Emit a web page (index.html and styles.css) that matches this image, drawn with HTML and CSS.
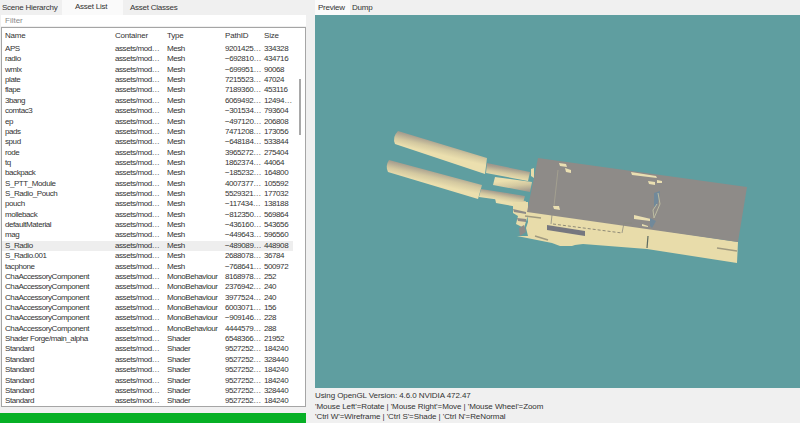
FILE: index.html
```html
<!DOCTYPE html>
<html lang="en">
<head>
<meta charset="utf-8">
<title>Asset List</title>
<link rel="stylesheet" href="styles.css">
</head>
<body>
<div class="app">
  <section class="left">
    <div class="tabs">
      <span class="tab tab-scene">Scene Hierarchy</span>
      <span class="tab tab-list">Asset List</span>
      <span class="tab tab-classes">Asset Classes</span>
    </div>
    <div class="filter">Filter</div>
    <div class="list">
      <div class="row head"><span>Name</span><span>Container</span><span>Type</span><span>PathID</span><span>Size</span></div>
      <div class="row"><span>APS</span><span>assets/mod…</span><span>Mesh</span><span>9201425…</span><span>334328</span></div>
      <div class="row"><span>radio</span><span>assets/mod…</span><span>Mesh</span><span>−692810…</span><span>434716</span></div>
      <div class="row"><span>wmlx</span><span>assets/mod…</span><span>Mesh</span><span>−699951…</span><span>90068</span></div>
      <div class="row"><span>plate</span><span>assets/mod…</span><span>Mesh</span><span>7215523…</span><span>47024</span></div>
      <div class="row"><span>flape</span><span>assets/mod…</span><span>Mesh</span><span>7189360…</span><span>453116</span></div>
      <div class="row"><span>3bang</span><span>assets/mod…</span><span>Mesh</span><span>6069492…</span><span>12494…</span></div>
      <div class="row"><span>comtac3</span><span>assets/mod…</span><span>Mesh</span><span>−301534…</span><span>793604</span></div>
      <div class="row"><span>ep</span><span>assets/mod…</span><span>Mesh</span><span>−497120…</span><span>206808</span></div>
      <div class="row"><span>pads</span><span>assets/mod…</span><span>Mesh</span><span>7471208…</span><span>173056</span></div>
      <div class="row"><span>spud</span><span>assets/mod…</span><span>Mesh</span><span>−648184…</span><span>533844</span></div>
      <div class="row"><span>rode</span><span>assets/mod…</span><span>Mesh</span><span>3965272…</span><span>275404</span></div>
      <div class="row"><span>tq</span><span>assets/mod…</span><span>Mesh</span><span>1862374…</span><span>44064</span></div>
      <div class="row"><span>backpack</span><span>assets/mod…</span><span>Mesh</span><span>−185232…</span><span>164800</span></div>
      <div class="row"><span>S_PTT_Module</span><span>assets/mod…</span><span>Mesh</span><span>4007377…</span><span>105592</span></div>
      <div class="row"><span>S_Radio_Pouch</span><span>assets/mod…</span><span>Mesh</span><span>5529321…</span><span>177032</span></div>
      <div class="row"><span>pouch</span><span>assets/mod…</span><span>Mesh</span><span>−117434…</span><span>138188</span></div>
      <div class="row"><span>molleback</span><span>assets/mod…</span><span>Mesh</span><span>−812350…</span><span>569864</span></div>
      <div class="row"><span>defaultMaterial</span><span>assets/mod…</span><span>Mesh</span><span>−436160…</span><span>543656</span></div>
      <div class="row"><span>mag</span><span>assets/mod…</span><span>Mesh</span><span>−449643…</span><span>596560</span></div>
      <div class="row selected"><span>S_Radio</span><span>assets/mod…</span><span>Mesh</span><span>−489089…</span><span>448908</span></div>
      <div class="row"><span>S_Radio.001</span><span>assets/mod…</span><span>Mesh</span><span>2688078…</span><span>36784</span></div>
      <div class="row"><span>tacphone</span><span>assets/mod…</span><span>Mesh</span><span>−768641…</span><span>500972</span></div>
      <div class="row"><span>ChaAccessoryComponent</span><span>assets/mod…</span><span>MonoBehaviour</span><span>8168978…</span><span>252</span></div>
      <div class="row"><span>ChaAccessoryComponent</span><span>assets/mod…</span><span>MonoBehaviour</span><span>2376942…</span><span>240</span></div>
      <div class="row"><span>ChaAccessoryComponent</span><span>assets/mod…</span><span>MonoBehaviour</span><span>3977524…</span><span>240</span></div>
      <div class="row"><span>ChaAccessoryComponent</span><span>assets/mod…</span><span>MonoBehaviour</span><span>6003071…</span><span>156</span></div>
      <div class="row"><span>ChaAccessoryComponent</span><span>assets/mod…</span><span>MonoBehaviour</span><span>−909146…</span><span>228</span></div>
      <div class="row"><span>ChaAccessoryComponent</span><span>assets/mod…</span><span>MonoBehaviour</span><span>4444579…</span><span>288</span></div>
      <div class="row"><span>Shader Forge/main_alpha</span><span>assets/mod…</span><span>Shader</span><span>6548366…</span><span>21952</span></div>
      <div class="row"><span>Standard</span><span>assets/mod…</span><span>Shader</span><span>9527252…</span><span>184240</span></div>
      <div class="row"><span>Standard</span><span>assets/mod…</span><span>Shader</span><span>9527252…</span><span>328440</span></div>
      <div class="row"><span>Standard</span><span>assets/mod…</span><span>Shader</span><span>9527252…</span><span>184240</span></div>
      <div class="row"><span>Standard</span><span>assets/mod…</span><span>Shader</span><span>9527252…</span><span>184240</span></div>
      <div class="row"><span>Standard</span><span>assets/mod…</span><span>Shader</span><span>9527252…</span><span>328440</span></div>
      <div class="row"><span>Standard</span><span>assets/mod…</span><span>Shader</span><span>9527252…</span><span>184240</span></div>
      <div class="scrollbar"></div>
    </div>
    <div class="progress"></div>
  </section>
  <section class="right">
    <div class="tabs right-tabs">
      <span class="tab tab-preview">Preview</span>
      <span class="tab tab-dump">Dump</span>
    </div>
    <svg class="viewport" viewBox="315 15 485 373" aria-label="3D preview of the S_Radio mesh">
      <defs>
        <linearGradient id="stops">
          <stop offset="0" stop-color="#8f8b8a"/>
          <stop offset="0.3" stop-color="#a9a08f"/>
          <stop offset="0.65" stop-color="#d3c8a0"/>
          <stop offset="1" stop-color="#ebdfae"/>
        </linearGradient>
        <linearGradient id="barrel-a" href="#stops" gradientUnits="userSpaceOnUse" x1="445" y1="138" x2="441" y2="155"/>
        <linearGradient id="barrel-b" href="#stops" gradientUnits="userSpaceOnUse" x1="437" y1="166" x2="433" y2="184"/>
        <linearGradient id="neck-a" href="#stops" gradientUnits="userSpaceOnUse" x1="510" y1="165" x2="508" y2="178"/>
        <linearGradient id="neck-b" href="#stops" gradientUnits="userSpaceOnUse" x1="504" y1="190" x2="502" y2="201"/>
        <linearGradient id="block" href="#stops" gradientUnits="userSpaceOnUse" x1="514" y1="197" x2="512" y2="180"/>
      </defs>
      <path class="barrel-a" d="M398 131 L487 158 L485 174 L395 144 Q392 137 398 131Z"/>
      <path class="neck-a" d="M487 163 L530 172 L528 181 L486 173Z"/>
      <path class="barrel-b" d="M389 160 L482 185 L478 199 L388 172 Q385 166 389 160Z"/>
      <path class="neck-b" d="M481 189 L525 196 L523 203 L479 197Z"/>
      <path class="block" d="M495 177 L532 182 L530 192 L493 185Z"/>
      <path class="neck-b" d="M495 198 L526 201 L524 208 L496 203Z"/>
      <path class="cream" d="M531 169 L534 168 L534 178 L531 176Z"/>
      <path class="cream" d="M513 202 L528 202 L528 215 L524 228 L516 224 L518 216 L513 213Z"/>
      <path class="grey" d="M513 209 L526 212 L526 214 L514 212Z"/>
      <path class="grey" d="M517 218 L526 219 L526 222 L518 221Z"/>
      <path class="grey" d="M519 228 L524 225 L526 232 L520 236Z"/>
      <path class="cream" d="M527 210 L738 242 L737 263 L647 249 L583 244 L575 245 L572 246 L560 246 L552 243 L517 236 L528 236 L526 228 L528 222Z"/>
      <path class="grey" d="M538 158 L747 187 L738 242 L527 212Z"/>
      <ellipse class="cream" cx="567" cy="240" rx="9" ry="5.5"/>
      <path class="slot" d="M547 225 L585 231 L585 236 L547 230Z"/>
      <path class="dash" d="M553 224 L622 233"/>
      <path class="thin" d="M552 215 L551 224 M622 233 L624 223 L632 223"/>
      <path class="dark" d="M648 236 L647 248"/>
      <path class="line" d="M717 248 L737 251"/>
      <path class="line" d="M525 216 L541 218"/>
      <path class="line" d="M535 236 L548 240"/>
      <path class="hi" d="M559 163 L566 164 L567 167 L560 166Z M565 168 L571 170 L571 173 L566 172Z M631 172 L656 176 L657 178 L632 175Z M648 181 L655 182 L655 185 L649 184Z M657 180 L662 181 L662 183 L657 183Z M553 206 L559 206 L560 210 L554 209Z M634 215 L651 219 L650 221 L634 219Z M642 224 L648 226 L648 227 L642 226Z"/>
      <path class="thin pale" d="M558 170 L554 206"/>
      <path class="bluish" d="M654 193 L660 191 L659 198 L657 206 L654 207Z M650 218 L656 221 L652 228 L650 226Z"/>
      <path class="outline" d="M658 193 L660 204 L654 218 L653 210 L657 204"/>
    </svg>
    <div class="status">
      <p>Using OpenGL Version: 4.6.0 NVIDIA 472.47</p>
      <p>'Mouse Left'=Rotate | 'Mouse Right'=Move | 'Mouse Wheel'=Zoom</p>
      <p>'Ctrl W'=Wireframe | 'Ctrl S'=Shade | 'Ctrl N'=ReNormal</p>
    </div>
  </section>
</div>
</body>
</html>
```
FILE: styles.css
```css
* { box-sizing: border-box; }
html, body { margin: 0; height: 100%; }
body {
  background: #f0f0f0;
  color: #333;
  font-family: "Liberation Sans", Arial, sans-serif;
  font-size: 8px;
  overflow: hidden;
}
.app {
  display: flex;
  width: 800px;
  height: 423px;
  gap: 8px;
}
.left {
  width: 307px;
  flex: none;
  display: flex;
  flex-direction: column;
}
.right {
  flex: 1;
  display: flex;
  flex-direction: column;
  min-width: 0;
}
.tabs {
  display: flex;
  height: 15px;
  flex: none;
  align-items: stretch;
  letter-spacing: -0.25px;
}
.tab {
  display: flex;
  align-items: center;
  height: 15px;
  white-space: nowrap;
}
.tab-scene { width: 62px; padding-left: 2px; }
.tab-list { width: 61px; padding-left: 13px; background: #fafafa; padding-bottom: 2px; }
.tab-classes { padding-left: 7px; }
.tab-preview { width: 35px; padding-left: 3px; background: #fafafa; }
.tab-dump { padding-left: 2px; }
.filter {
  height: 11px;
  margin: 0 1px;
  padding-left: 4px;
  background: #fff;
  color: #8a8a8a;
  line-height: 11px;
  flex: none;
}
.list {
  position: relative;
  height: 380px;
  margin: 1px 1px 0;
  flex: none;
  background: #fff;
  border: 1px solid #a5a5a5;
  padding-top: 1px;
}
.row {
  display: grid;
  grid-template-columns: 110px 52px 58px 39px 28px;
  height: 10.37px;
  line-height: 10.37px;
  padding-left: 3px;
  width: 291px;
  white-space: nowrap;
  letter-spacing: -0.42px;
}
.head {
  height: 15px;
  line-height: 13px;
  letter-spacing: -0.2px;
}
.selected { background: #eeeeee; }
.scrollbar {
  position: absolute;
  left: 297px;
  top: 51px;
  width: 2px;
  height: 56px;
  background: #a8a8a8;
}
.progress {
  height: 10px;
  margin-top: 6px;
  width: 306px;
  background: #06b025;
  flex: none;
}
.viewport {
  display: block;
  width: 485px;
  height: 373px;
  flex: none;
  background: #5f9ea0;
}
.status {
  padding-top: 3px;
  color: #333;
  letter-spacing: -0.08px;
}
.status p {
  margin: 0;
  height: 10.5px;
  line-height: 10.5px;
}
.barrel-a { fill: url(#barrel-a); }
.barrel-b { fill: url(#barrel-b); }
.neck-a { fill: url(#neck-a); }
.neck-b { fill: url(#neck-b); }
.block { fill: url(#block); }
.cream { fill: #e8dcaa; }
.grey { fill: #8e8b88; }
.slot { fill: #76777f; }
.hi { fill: #eadfb2; }
.line { stroke: #a09a80; stroke-width: 1.5; fill: none; }
.thin { stroke: #8c8a80; stroke-width: 0.8; fill: none; }
.pale { stroke: #a8a592; }
.dash { stroke: #77756a; stroke-width: 0.8; stroke-dasharray: 3 2; fill: none; }
.dark { stroke: #5d6a60; stroke-width: 1.2; fill: none; }
.bluish { fill: #71899a; }
.outline { stroke: #bdbda2; stroke-width: 1; fill: none; }
```
